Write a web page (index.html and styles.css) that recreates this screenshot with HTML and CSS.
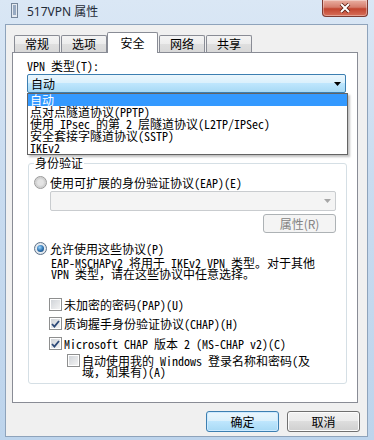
FILE: index.html
```html
<!DOCTYPE html>
<html lang="zh-CN">
<head>
    <meta charset="UTF-8">
    <title>517VPN 属性</title>
    <link rel="stylesheet" href="styles.css">
</head>
<body>
    <div class="window">
        <!-- Title bar -->
        <div class="titlebar">
            <svg class="app-icon" width="8" height="15" viewBox="0 0 8 15">
                <rect x="0.5" y="0.5" width="6" height="14" fill="#e4e9ef" stroke="#76879b"/>
                <path d="M2 3h3M2 5h3M2 7h3M2 9h3M2 11h3" stroke="#4c6d95"/>
            </svg>
            <span class="title">517VPN 属性</span>
            <div class="close">
                <svg width="12" height="10" viewBox="0 0 12 10">
                    <path d="M2 1l8 8M10 1l-8 8" stroke="#5b1d12" stroke-width="3.6"/>
                    <path d="M2 1l8 8M10 1l-8 8" stroke="#fff" stroke-width="2"/>
                </svg>
            </div>
        </div>

        <div class="client">
            <div class="tabs">
                <div class="tab">常规</div>
                <div class="tab">选项</div>
                <div class="tab active">安全</div>
                <div class="tab">网络</div>
                <div class="tab">共享</div>
            </div>

            <div class="panel">
                <div class="field-label">VPN 类型(T):</div>
                <div class="combo-wrap">
                    <div class="combo open">
                        <span>自动</span>
                        <svg width="7" height="4" viewBox="0 0 7 4"><path d="M0 0h7L3.5 4z" fill="#000"/></svg>
                    </div>
                    <ul class="droplist">
                        <li class="selected">自动</li>
                        <li>点对点隧道协议(PPTP)</li>
                        <li>使用 IPsec 的第 2 层隧道协议(L2TP/IPSec)</li>
                        <li>安全套接字隧道协议(SSTP)</li>
                        <li>IKEv2</li>
                    </ul>
                </div>

                <!-- covered by the open list -->
                <div class="field-label under">数据加密(D):</div>
                <div class="combo under-combo"></div>

                <fieldset class="group">
                    <legend>身份验证</legend>

                    <div class="opt">
                        <span class="radio"></span>
                        <span>使用可扩展的身份验证协议(EAP)(E)</span>
                    </div>
                    <div class="combo disabled">
                        <svg width="7" height="4" viewBox="0 0 7 4"><path d="M0 0h7L3.5 4z" fill="#a6a6a6"/></svg>
                    </div>
                    <div class="prop-row">
                        <div class="btn disabled">属性(R)</div>
                    </div>

                    <div class="opt gap-radio">
                        <span class="radio checked"></span>
                        <span>允许使用这些协议(P)</span>
                    </div>
                    <div class="desc">EAP-MSCHAPv2 将用于 IKEv2 VPN 类型。对于其他<br>VPN 类型，请在这些协议中任意选择。</div>

                    <div class="opt check pap">
                        <span class="box"></span>
                        <span>未加密的密码(PAP)(U)</span>
                    </div>
                    <div class="opt check chap">
                        <span class="box">
                            <svg width="9" height="8" viewBox="0 0 9 8"><path d="M1 4l2.4 2.6L8 1" fill="none" stroke="#2e4a78" stroke-width="1.8"/></svg>
                        </span>
                        <span>质询握手身份验证协议(CHAP)(H)</span>
                    </div>
                    <div class="opt check mschap">
                        <span class="box">
                            <svg width="9" height="8" viewBox="0 0 9 8"><path d="M1 4l2.4 2.6L8 1" fill="none" stroke="#2e4a78" stroke-width="1.8"/></svg>
                        </span>
                        <span>Microsoft CHAP 版本 2 (MS-CHAP v2)(C)</span>
                    </div>
                    <div class="opt check sub">
                        <span class="box"></span>
                        <span class="two-line">自动使用我的 Windows 登录名称和密码(及<br>域，如果有)(A)</span>
                    </div>
                </fieldset>
            </div>

            <div class="actions">
                <div class="btn default">确定</div>
                <div class="btn">取消</div>
            </div>
        </div>
    </div>
</body>
</html>
```

FILE: styles.css
```css
/* Win7 style property dialog */
* {
    box-sizing: border-box;
}

body {
    margin: 0;
    width: 374px;
    height: 440px;
    overflow: hidden;
    font-family: "Noto Sans Mono CJK SC", "Noto Sans CJK SC", monospace;
    font-size: 12px;
    line-height: 12px;
    color: #000;
}

.window {
    width: 374px;
    height: 440px;
    display: flex;
    flex-direction: column;
    background: linear-gradient(180deg, #dae7f5 0%, #c9dcf0 40%, #bdd4ec 100%);
}

/* Title bar */
.titlebar {
    height: 24px;
    flex-shrink: 0;
    display: flex;
    align-items: flex-start;
}

.app-icon {
    margin: 3px 0 0 11px;
}

.title {
    margin: 5px 0 0 8px;
    font-family: "Noto Sans", "Noto Sans CJK SC", sans-serif;
    font-size: 12px;
    line-height: 13px;
    color: #1e2a36;
}

.close {
    margin-left: auto;
    margin-right: 6px;
    width: 46px;
    height: 17px;
    border: 1px solid #7d3b32;
    border-top: none;
    border-radius: 0 0 4px 4px;
    background: linear-gradient(#eab0a2, #d57d6c 45%, #c2452f 55%, #d7705a);
    box-shadow: inset 0 0 0 1px rgba(255, 255, 255, 0.35);
    display: flex;
    align-items: center;
    justify-content: center;
}

/* Client area */
.client {
    flex: 1;
    margin: 0 6px 3px 5px;
    background: #f0f0f0;
    border: 1px solid #8ea3bb;
    padding: 7px 9px 0 6px;
}

.tabs {
    display: flex;
    align-items: flex-end;
    height: 20px;
    padding-left: 2px;
    position: relative;
    z-index: 1;
}

.tab {
    width: 46px;
    height: 17px;
    margin-right: 1px;
    border: 1px solid #898c95;
    border-bottom: none;
    border-radius: 2px 2px 0 0;
    background: linear-gradient(#f4f4f4, #ececec 50%, #dfdfdf 50%, #d8d8d8);
    text-align: center;
    font-family: "Noto Sans CJK SC", sans-serif;
    line-height: 16px;
}

.tab.active {
    width: 51px;
    height: 21px;
    margin: 0 1px -1px -1px;
    background: #fff;
    line-height: 19px;
}

.panel {
    height: 351px;
    background: #fff;
    border: 1px solid #898c95;
    padding: 7px 11px 0 14px;
}

.field-label {
    height: 12px;
}

.combo-wrap {
    position: relative;
    margin-top: 2px;
}

.combo {
    height: 19px;
    border: 1px solid #acacac;
    border-radius: 2px;
    display: flex;
    align-items: center;
    justify-content: space-between;
    padding: 0 4px 0 3px;
}

.combo.open {
    border-color: #3c7fb1;
    background: linear-gradient(#eaf6fd, #d9f0fc 50%, #bee6fd 50%, #a7d9f5);
}

.droplist {
    position: absolute;
    left: 0;
    top: 19px;
    width: 321px;
    margin: 0;
    padding: 0;
    list-style: none;
    background: #fff;
    border: 1px solid #646464;
    box-shadow: 2px 2px 2px rgba(0, 0, 0, 0.25);
    z-index: 2;
}

.droplist li {
    height: 12px;
    padding-left: 2px;
    white-space: nowrap;
}

.droplist li.selected {
    background: #3399ff;
    color: #fff;
}

.field-label.under {
    margin-top: 9px;
}

.under-combo {
    margin-top: 2px;
}

/* Authentication group */
.group {
    margin: 22px -1px 0 1px;
    border: 1px solid #d5dfe5;
    border-radius: 3px;
    padding: 7px 10px 6px 5px;
}

.group legend {
    padding: 0 1px;
    line-height: 12px;
    font-family: "Noto Sans CJK SC", sans-serif;
}

.opt {
    display: flex;
    align-items: center;
    height: 13px;
    white-space: nowrap;
}

.radio {
    width: 13px;
    height: 13px;
    margin-right: 3px;
    border-radius: 50%;
    border: 1px solid #9a9a9a;
    background: radial-gradient(circle, #e4e4e4 0 35%, #cfcfcf 60%, #f3f3f3 100%);
    display: flex;
    align-items: center;
    justify-content: center;
}

.radio.checked {
    border-color: #5d7188;
    background: radial-gradient(circle, #e9eef3 0 50%, #c9d3dd 100%);
}

.radio.checked::after {
    content: "";
    width: 7px;
    height: 7px;
    border-radius: 50%;
    background: radial-gradient(circle at 40% 35%, #9bd6ff, #2a6fae 55%, #183f6a);
}

.combo.disabled {
    margin: 2px 0 0 16px;
    height: 20px;
    border-color: #c9cccf;
    background: #f4f4f4;
    justify-content: flex-end;
}

.prop-row {
    display: flex;
    justify-content: flex-end;
    margin-top: 3px;
}

.btn {
    width: 73px;
    height: 21px;
    border: 1px solid #707070;
    border-radius: 3px;
    background: linear-gradient(#f2f2f2, #ebebeb 50%, #dddddd 50%, #cfcfcf);
    box-shadow: inset 0 0 0 1px #fcfcfc;
    text-align: center;
    line-height: 19px;
    font-family: "Noto Sans CJK SC", sans-serif;
}

.btn.disabled {
    height: 19px;
    line-height: 17px;
    border-color: #adb2b5;
    background: #f4f4f4;
    box-shadow: none;
    color: #838383;
}

.btn.default {
    border-color: #3c7fb1;
    background: linear-gradient(#eaf6fd, #d9f0fc 50%, #bee6fd 50%, #a7d9f5);
    box-shadow: inset 0 0 0 1px #cdeaff;
}

.gap-radio {
    margin-top: 9px;
}

.desc {
    margin: 2px 0 0 17px;
    line-height: 11px;
    white-space: nowrap;
}

.check {
    margin-left: 15px;
}

.check .box {
    width: 13px;
    height: 13px;
    margin-right: 2px;
    flex-shrink: 0;
    border: 1px solid #8e8f8f;
    background: linear-gradient(135deg, #cdd1d6, #f6f6f6);
    box-shadow: inset 0 0 0 1px #fff;
    display: flex;
    align-items: center;
    justify-content: center;
}

.check.pap {
    margin-top: 19px;
}

.check.chap {
    margin-top: 6px;
}

.check.mschap {
    margin-top: 7px;
}

.check.sub {
    margin-left: 33px;
    margin-top: 5px;
    height: auto;
    align-items: flex-start;
}

.check.sub .box {
    margin-top: -1px;
}

.two-line {
    line-height: 11px;
}

/* Dialog buttons */
.actions {
    display: flex;
    justify-content: flex-end;
    gap: 8px;
    margin: 8px -2px 0 0;
}
```
